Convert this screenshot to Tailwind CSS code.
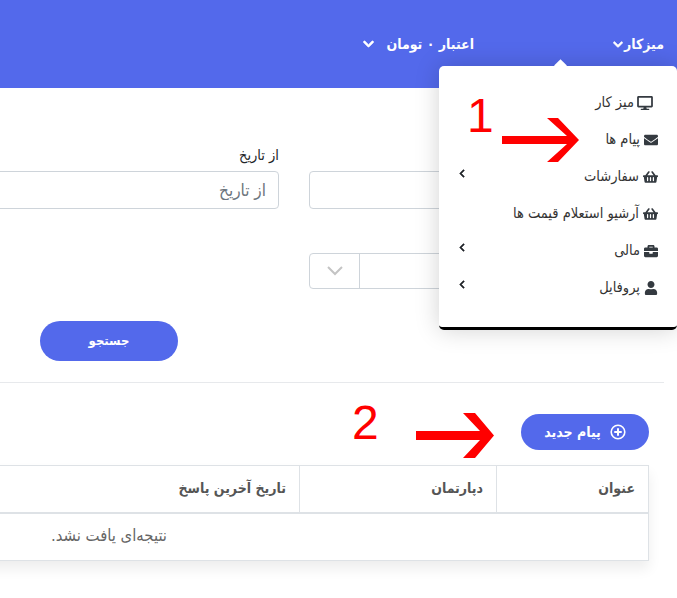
<!DOCTYPE html>
<html lang="fa" dir="rtl">
<head>
<meta charset="utf-8">
<title>پیام ها</title>
<script src="https://cdn.jsdelivr.net/npm/@tailwindcss/browser@4"></script>
</head>
<body class="bg-white font-['DejaVu_Sans_Condensed','DejaVu_Sans',sans-serif] text-[14px] text-[#444]">
<div class="relative w-[677px] h-[598px] overflow-hidden">
  <header class="h-[88px] bg-[#5369eb] flex items-start pt-[34px] pr-[13px] text-white text-[14px] font-bold">
    <div class="flex items-center gap-[1px] h-5 w-[148px]"><span>میزکار</span>
      <svg class="w-[10px] h-[11px] fill-white stroke-white stroke-[30]" viewBox="0 0 448 512"><path d="M207.029 381.476L12.686 187.132c-9.373-9.373-9.373-24.569 0-33.941l22.667-22.667c9.357-9.357 24.522-9.375 33.901-.04L224 284.505l154.745-154.021c9.379-9.335 24.544-9.317 33.901.04l22.667 22.667c9.373 9.373 9.373 24.569 0 33.941L240.971 381.476c-9.373 9.372-24.569 9.372-33.942 0z"/></svg></div>
    <div class="flex items-center gap-[12px] h-5 mr-[42px]"><span>اعتبار ۰ تومان</span>
      <svg class="w-[11px] h-[12px] fill-white stroke-white stroke-[30]" viewBox="0 0 448 512"><path d="M207.029 381.476L12.686 187.132c-9.373-9.373-9.373-24.569 0-33.941l22.667-22.667c9.357-9.357 24.522-9.375 33.901-.04L224 284.505l154.745-154.021c9.379-9.335 24.544-9.317 33.901.04l22.667 22.667c9.373 9.373 9.373 24.569 0 33.941L240.971 381.476c-9.373 9.372-24.569 9.372-33.942 0z"/></svg></div>
  </header>

  <main class="pr-[13px]">
    <section class="pr-[15px] pt-[59px]">
      <div class="flex gap-[30px] w-[710px]">
        <div class="w-[340px] shrink-0 pt-[24px]">
          <input class="w-full h-[38px] border border-[#ced4da] rounded-[4px]" aria-label="شماره">
          <div class="mt-[44px] flex w-full h-[36px] border border-[#ced4da] rounded-[4px]">
            <div class="flex-1"></div>
            <div class="w-[50px] border-r border-[#ced4da] flex items-center justify-center">
              <svg class="w-[16px] h-[10px] stroke-[#c4c4c4] fill-none" stroke-width="2" viewBox="0 0 16 10"><path d="M1 1l7 7 7-7"/></svg>
            </div>
          </div>
        </div>
        <div class="w-[340px] shrink-0">
          <label class="block h-[24px] text-[14.500px] text-[#212529] leading-[16px]">از تاریخ</label>
          <input class="w-full h-[38px] border border-[#ced4da] rounded-[4px] px-3 text-[17px] placeholder:text-[#6c757d]" placeholder="از تاریخ">
          <div class="mt-[112px] pr-[101px]">
            <button class="w-[138px] h-[40px] rounded-[20px] bg-[#5369eb] text-white text-[13px] font-bold">جستجو</button>
          </div>
        </div>
      </div>
    </section>

    <div class="mt-[21px] h-px bg-[#e7e9ec] w-[664px] absolute left-0"></div>

    <section class="pr-[15px] pt-[53px]">
      <button class="flex items-center justify-center gap-[9px] w-[128px] h-[36px] rounded-[18px] bg-[#5369eb] text-white text-[14px] font-bold">
        <svg class="w-[16px] h-[16px] fill-none stroke-white" stroke-width="1.6" stroke-linecap="round" viewBox="0 0 16 16"><circle cx="8" cy="8" r="6.8"/><path d="M8 5v6M5 8h6" stroke-width="2"/></svg>
        <span>پیام جدید</span>
      </button>
      <div class="mt-[15px] w-[900px] shadow-[0_8px_12px_rgba(0,0,0,0.07)]">
        <table class="w-full table-fixed border-collapse border border-[#dee2e6] text-right">
          <thead>
            <tr class="h-[47px] border-b-2 border-[#dee2e6] text-[#555] text-[14px] font-bold">
              <th class="w-[152px] border-l border-[#dee2e6] px-[13px] text-right">عنوان</th>
              <th class="w-[197px] border-l border-[#dee2e6] px-[13px] text-right">دپارتمان</th>
              <th class="px-[13px] text-right">تاریخ آخرین پاسخ</th>
            </tr>
          </thead>
          <tbody>
            <tr class="h-[48px]">
              <td colspan="3" class="text-[16.500px] text-[#666] pr-[481px]">نتیجه‌ای یافت نشد.</td>
            </tr>
          </tbody>
        </table>
      </div>
    </section>
  </main>

  <!-- dropdown overlay -->
  <div class="absolute left-[439px] top-[66px] w-[238px] h-[264px] bg-white rounded-[5px] border-b-[3px] border-black shadow-[0_0_24px_rgba(0,0,0,0.18)] pt-[18px] text-[14.500px] text-[#333]">
    <div class="absolute -top-[5px] left-[117px] w-[9px] h-[9px] rotate-45 bg-white"></div>
    <ul class="flex flex-col pr-[19px]">
      <li class="h-[37px] flex items-center gap-[3px] pr-[5px]"><svg class="w-[16px] h-[14px] fill-[#343a40]" viewBox="0 0 576 512"><path d="M528 0H48C21.500 0 0 21.500 0 48v320c0 26.500 21.500 48 48 48h192l-16 48h-72c-13.300 0-24 10.700-24 24s10.700 24 24 24h272c13.300 0 24-10.700 24-24s-10.700-24-24-24h-72l-16-48h192c26.500 0 48-21.500 48-48V48c0-26.500-21.500-48-48-48zm-16 352H64V64h448v288z"/></svg><span>میز کار</span></li>
      <li class="h-[37px] flex items-center gap-[4px]"><svg class="w-[14px] h-[14px] fill-[#343a40]" viewBox="0 0 512 512"><path d="M502.300 190.800c3.900-3.100 9.700-.2 9.700 4.700V400c0 26.500-21.500 48-48 48H48c-26.500 0-48-21.500-48-48V195.600c0-5 5.700-7.800 9.700-4.700 22.400 17.400 52.100 39.500 154.100 113.600 21.100 15.400 56.700 47.800 92.200 47.600 35.700.3 72-32.800 92.300-47.600 102-74.100 131.600-96.300 154-113.700zM256 320c23.200.4 56.600-29.200 73.400-41.400 132.700-96.300 142.800-104.700 173.400-128.700 5.800-4.500 9.200-11.500 9.200-18.900v-19c0-26.500-21.500-48-48-48H48C21.500 64 0 85.500 0 112v19c0 7.400 3.400 14.300 9.200 18.900 30.600 23.900 40.700 32.400 173.400 128.700 16.800 12.200 50.200 41.800 73.400 41.400z"/></svg><span>پیام ها</span></li>
      <li class="h-[37px] flex items-center gap-[4px]"><svg class="w-[15px] h-[14px] fill-[#343a40]" viewBox="0 0 576 512"><path d="M576 216v16c0 13.255-10.745 24-24 24h-8l-26.113 182.788C514.509 462.435 494.257 480 470.370 480H105.630c-23.887 0-44.139-17.565-47.518-41.212L32 256h-8c-13.255 0-24-10.745-24-24v-16c0-13.255 10.745-24 24-24h67.341l106.780-146.821c10.395-14.292 30.407-17.453 44.701-7.058 14.293 10.395 17.453 30.408 7.058 44.701L170.477 192h235.046L326.120 82.821c-10.395-14.292-7.234-34.306 7.059-44.701 14.291-10.395 34.306-7.235 44.701 7.058L484.659 192H552c13.255 0 24 10.745 24 24zM312 392V280c0-13.255-10.745-24-24-24s-24 10.745-24 24v112c0 13.255 10.745 24 24 24s24-10.745 24-24zm112 0V280c0-13.255-10.745-24-24-24s-24 10.745-24 24v112c0 13.255 10.745 24 24 24s24-10.745 24-24zm-224 0V280c0-13.255-10.745-24-24-24s-24 10.745-24 24v112c0 13.255 10.745 24 24 24s24-10.745 24-24z"/></svg><span>سفارشات</span>
        <svg class="w-[6px] h-[9px] fill-[#212529] stroke-[#212529] stroke-[30] mr-auto ml-[20px] -mt-[7px]" viewBox="0 0 320 512"><path d="M34.520 239.030L228.870 44.690c9.370-9.370 24.570-9.370 33.940 0l22.670 22.670c9.360 9.360 9.370 24.520.040 33.900L131.490 256l154.020 154.750c9.340 9.380 9.320 24.540-.040 33.900l-22.670 22.670c-9.370 9.370-24.570 9.370-33.940 0L34.520 272.970c-9.370-9.370-9.370-24.570 0-33.940z"/></svg></li>
      <li class="h-[37px] flex items-center gap-[4px]"><svg class="w-[15px] h-[14px] fill-[#343a40]" viewBox="0 0 576 512"><path d="M576 216v16c0 13.255-10.745 24-24 24h-8l-26.113 182.788C514.509 462.435 494.257 480 470.370 480H105.630c-23.887 0-44.139-17.565-47.518-41.212L32 256h-8c-13.255 0-24-10.745-24-24v-16c0-13.255 10.745-24 24-24h67.341l106.780-146.821c10.395-14.292 30.407-17.453 44.701-7.058 14.293 10.395 17.453 30.408 7.058 44.701L170.477 192h235.046L326.120 82.821c-10.395-14.292-7.234-34.306 7.059-44.701 14.291-10.395 34.306-7.235 44.701 7.058L484.659 192H552c13.255 0 24 10.745 24 24zM312 392V280c0-13.255-10.745-24-24-24s-24 10.745-24 24v112c0 13.255 10.745 24 24 24s24-10.745 24-24zm112 0V280c0-13.255-10.745-24-24-24s-24 10.745-24 24v112c0 13.255 10.745 24 24 24s24-10.745 24-24zm-224 0V280c0-13.255-10.745-24-24-24s-24 10.745-24 24v112c0 13.255 10.745 24 24 24s24-10.745 24-24z"/></svg><span>آرشیو استعلام قیمت ها</span></li>
      <li class="h-[37px] flex items-center gap-[4px]"><svg class="w-[14px] h-[14px] fill-[#343a40]" viewBox="0 0 512 512"><path d="M320 336c0 8.840-7.160 16-16 16h-96c-8.840 0-16-7.160-16-16v-48H0v144c0 25.600 22.400 48 48 48h416c25.600 0 48-22.400 48-48V288H320v48zm144-208h-80V80c0-25.600-22.400-48-48-48H176c-25.600 0-48 22.400-48 48v48H48c-25.600 0-48 22.400-48 48v80h512v-80c0-25.600-22.400-48-48-48zm-144 0H192V96h128v32z"/></svg><span>مالی</span>
        <svg class="w-[6px] h-[9px] fill-[#212529] stroke-[#212529] stroke-[30] mr-auto ml-[20px] -mt-[7px]" viewBox="0 0 320 512"><path d="M34.520 239.030L228.870 44.690c9.370-9.370 24.570-9.370 33.940 0l22.670 22.670c9.360 9.360 9.370 24.520.040 33.900L131.490 256l154.020 154.750c9.340 9.380 9.320 24.540-.040 33.900l-22.670 22.670c-9.370 9.370-24.570 9.370-33.940 0L34.520 272.970c-9.370-9.370-9.370-24.570 0-33.940z"/></svg></li>
      <li class="h-[37px] flex items-center gap-[4px]"><svg class="w-[14px] h-[14px] fill-[#343a40]" viewBox="0 0 448 512"><path d="M224 256c70.700 0 128-57.300 128-128S294.700 0 224 0 96 57.300 96 128s57.300 128 128 128zm89.600 32h-16.700c-22.200 10.200-46.900 16-72.900 16s-50.600-5.800-72.900-16h-16.700C60.200 288 0 348.200 0 422.400V464c0 26.500 21.500 48 48 48h352c26.500 0 48-21.500 48-48v-41.600c0-74.200-60.200-134.400-134.400-134.400z"/></svg><span>پروفایل</span>
        <svg class="w-[6px] h-[9px] fill-[#212529] stroke-[#212529] stroke-[30] mr-auto ml-[20px] -mt-[7px]" viewBox="0 0 320 512"><path d="M34.520 239.030L228.870 44.690c9.370-9.370 24.570-9.370 33.940 0l22.670 22.670c9.360 9.360 9.370 24.520.040 33.900L131.490 256l154.020 154.750c9.340 9.380 9.320 24.540-.040 33.900l-22.670 22.670c-9.370 9.370-24.570 9.370-33.940 0L34.520 272.970c-9.370-9.370-9.370-24.570 0-33.940z"/></svg></li>
    </ul>
  </div>

  <!-- red annotations -->
  <span class="absolute left-[467px] top-[89px] text-[48px] leading-[54px] text-[#f00] font-['Liberation_Sans',sans-serif]">1</span>
  <svg class="absolute left-[500px] top-[116px] w-[82px] h-[48px] fill-[#f00]" viewBox="500 116 82 48"><path d="M502 136H567L547 118H558L579 140L558 162H547L567 144H502Z"/></svg>
  <span class="absolute left-[352px] top-[396px] text-[48px] leading-[54px] text-[#f00] font-['Liberation_Sans',sans-serif]">2</span>
  <svg class="absolute left-[414px] top-[410px] w-[84px] h-[50px] fill-[#f00]" viewBox="414 410 84 50"><path d="M416 431H480L463 413H475L494 435.500L475 458H463L480 440H416Z"/></svg>
</div>
</body>
</html>
